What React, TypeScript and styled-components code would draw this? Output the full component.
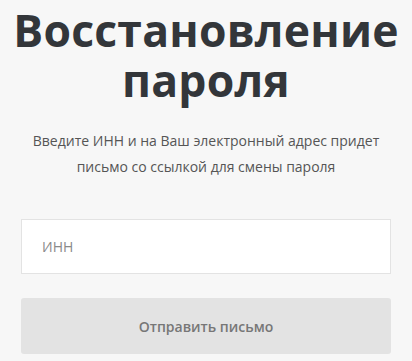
import React from "react";
import styled, { createGlobalStyle } from "styled-components";

const Global = createGlobalStyle`
    html, body {
        margin: 0;
        padding: 0;
        background: #f7f7f7;
        font-family: "Open Sans", "Liberation Sans", sans-serif;
    }
`;

const Page = styled.div`
    width: 412px;
    height: 361px;
    box-sizing: border-box;
    padding: 0 21px;
    display: flex;
    flex-direction: column;
    align-items: stretch;
    overflow: hidden;
`;

const Title = styled.h1`
    margin: 5px -10px 0;
    font-size: 44.5px;
    font-weight: 700;
    line-height: 50px;
    color: #33363a;
    text-align: center;
    letter-spacing: 0.2px;
`;

const Lead = styled.p`
    margin: 23px 0 0;
    font-size: 14px;
    line-height: 26px;
    color: #555;
    text-align: center;
`;

const Form = styled.form`
    margin-top: 39px;
    display: flex;
    flex-direction: column;
    gap: 24px;
`;

const Field = styled.input`
    height: 55px;
    box-sizing: border-box;
    border: 1px solid #e3e3e3;
    background: #fff;
    padding: 0 20px;
    font-family: inherit;
    font-size: 14px;
    color: #333;
    outline: none;

    &::placeholder {
        color: #8a8a8a;
    }
`;

const Submit = styled.button`
    height: 56px;
    border: none;
    border-radius: 3px;
    background: #e3e3e3;
    font-family: inherit;
    font-size: 14px;
    font-weight: 600;
    color: #777;
    cursor: default;
`;

export default function App() {
    return (
        <>
            <Global />
            <Page>
                <Title>
                    Восстановление
                    <br />
                    пароля
                </Title>
                <Lead>
                    Введите ИНН и на Ваш электронный адрес придет
                    <br />
                    письмо со ссылкой для смены пароля
                </Lead>
                <Form onSubmit={(e) => e.preventDefault()}>
                    <Field placeholder="ИНН" />
                    <Submit type="submit" disabled>
                        Отправить письмо
                    </Submit>
                </Form>
            </Page>
        </>
    );
}
